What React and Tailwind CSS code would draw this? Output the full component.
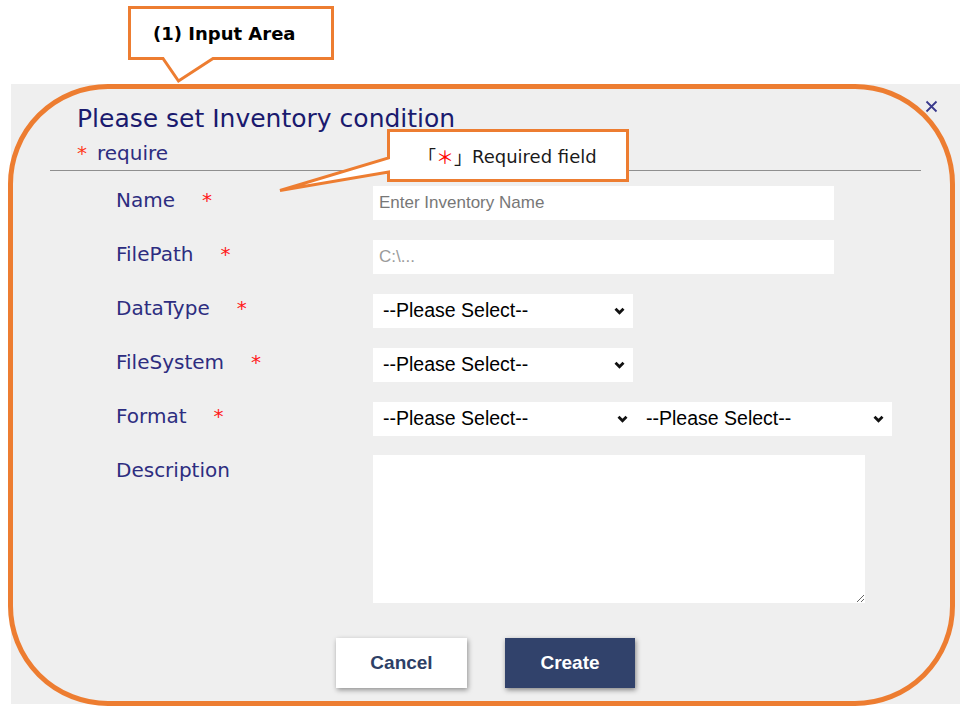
import React from "react";

const Chevron = () => (
  <svg width="11" height="8" viewBox="0 0 11 8" aria-hidden="true">
    <path d="M1.5 1.8 L5.5 5.8 L9.5 1.8" fill="none" stroke="#111" strokeWidth="2.8" />
  </svg>
);

function FakeSelect({ className }) {
  return (
    <div
      role="combobox"
      className={
        "flex h-[34px] items-center justify-between bg-white pl-[10px] pr-[8px] font-['Liberation_Sans',Arial,sans-serif] text-[19.5px] text-black " +
        className
      }
    >
      <span>--Please Select--</span>
      <Chevron />
    </div>
  );
}

function Label({ text, req }) {
  return (
    <div className="flex items-start font-['DejaVu_Sans',sans-serif] text-[20px] leading-[28px] text-[#2d2d80]">
      <span>{text}</span>
      {req && <span className="ml-[27px] text-[#ff1a1a]">*</span>}
    </div>
  );
}

export default function App() {
  return (
    <div className="relative h-[715px] w-[970px] overflow-hidden bg-white">
      <div className="pl-[11px] pt-[84px]">
        <div className="flex h-[620px] w-[949px] flex-col bg-[#efefef]">
          {/* header */}
          <div className="flex items-start justify-between pl-[66px] pr-[22px] pt-[20px]">
            <h1 className="font-['DejaVu_Sans',sans-serif] text-[25px] font-normal leading-[30px] text-[#1a1a6e]">
              Please set Inventory condition
            </h1>
            <button className="mt-[-4px] flex h-[13px] w-[13px] items-center justify-center">
              <svg width="13" height="13" viewBox="0 0 13 13" aria-hidden="true">
                <path d="M1.5 1.5 L11.5 11.5 M11.5 1.5 L1.5 11.5" stroke="#3a3a8c" strokeWidth="1.8" />
              </svg>
            </button>
          </div>
          <div className="mt-[7px] pl-[66px] font-['DejaVu_Sans',sans-serif] text-[20px] leading-[24px] text-[#2d2d80]">
            <span className="text-[#ff3a1a]">*</span>
            <span className="ml-[10px]">require</span>
          </div>
          <div className="ml-[39px] mt-[5px] h-px w-[871px] bg-[#8f8f8f]" />

          {/* form rows */}
          <div className="mt-[15px] grid grid-cols-[257px_1fr] gap-y-[20px] pl-[105px]">
            <Label text="Name" req />
            <input
              className="h-[34px] w-[461px] bg-white pl-[6px] font-['Liberation_Sans',Arial,sans-serif] text-[17px] text-black outline-none placeholder:text-[#777]"
              placeholder="Enter Inventory Name"
            />

            <Label text="FilePath" req />
            <input
              className="h-[34px] w-[461px] bg-white pl-[6px] font-['Liberation_Sans',Arial,sans-serif] text-[17px] text-black outline-none placeholder:text-[#9a9a9a]"
              placeholder="C:\..."
            />

            <Label text="DataType" req />
            <FakeSelect className="w-[260px]" />

            <Label text="FileSystem" req />
            <FakeSelect className="w-[260px]" />

            <Label text="Format" req />
            <div className="flex">
              <FakeSelect className="w-[263px]" />
              <FakeSelect className="w-[256px]" />
            </div>

            <Label text="Description" />
            <textarea className="mt-[-1px] h-[148px] w-[492px] resize bg-white outline-none" />
          </div>

          {/* buttons */}
          <div className="mt-[35px] flex justify-center gap-[38px]">
            <button className="h-[50px] w-[131px] bg-white font-['Liberation_Sans',Arial,sans-serif] text-[19px] font-bold text-[#2e3f66] shadow-[1px_2px_5px_rgba(0,0,0,0.4)]">
              Cancel
            </button>
            <button className="h-[50px] w-[130px] bg-[#31426b] font-['Liberation_Sans',Arial,sans-serif] text-[19px] font-bold text-white shadow-[1px_2px_5px_rgba(0,0,0,0.45)]">
              Create
            </button>
          </div>
        </div>
      </div>

      {/* annotation: orange frame */}
      <div className="pointer-events-none absolute left-[8px] top-[84px] h-[622px] w-[947px] rounded-[100px] border-[5px] border-[#ed7d31]" />

      {/* annotation callout 1 */}
      <div className="pointer-events-none absolute left-[127px] top-[5px] h-[80px] w-[210px]">
        <svg className="absolute inset-0" width="210" height="80" viewBox="127 5 210 80" aria-hidden="true">
          <path
            d="M129.5 7.5 H332.5 V58.5 H213 L178.5 81 L163 58.5 H129.5 Z"
            fill="#fff"
            stroke="#ed7d31"
            strokeWidth="3"
            strokeLinejoin="miter"
          />
        </svg>
        <div className="relative flex h-[57px] items-center pl-[26px] font-['DejaVu_Sans',sans-serif] text-[18px] font-bold text-black">
          (1) Input Area
        </div>
      </div>

      {/* annotation callout 2 */}
      <div className="pointer-events-none absolute left-[278px] top-[128px] h-[64px] w-[352px]">
        <svg className="absolute inset-0" width="352" height="64" viewBox="278 128 352 64" aria-hidden="true">
          <path
            d="M388.5 130.5 H627.5 V180.5 H388.5 V172 L280 190.5 L388.5 158 Z"
            fill="#fff"
            stroke="#ed7d31"
            strokeWidth="3"
            strokeLinejoin="miter"
          />
        </svg>
        <div className="relative ml-[110px] flex h-[56px] w-[240px] items-center pl-[30px] font-['DejaVu_Sans',sans-serif] text-[18px] text-[#1a1a1a]">
          <span className="font-['Noto_Sans_CJK_JP',sans-serif]">「</span>
          <span className="font-['Noto_Sans_CJK_JP',sans-serif] text-[#ff0000]">＊</span>
          <span className="font-['Noto_Sans_CJK_JP',sans-serif]">」</span>
          <span>Required field</span>
        </div>
      </div>
    </div>
  );
}
